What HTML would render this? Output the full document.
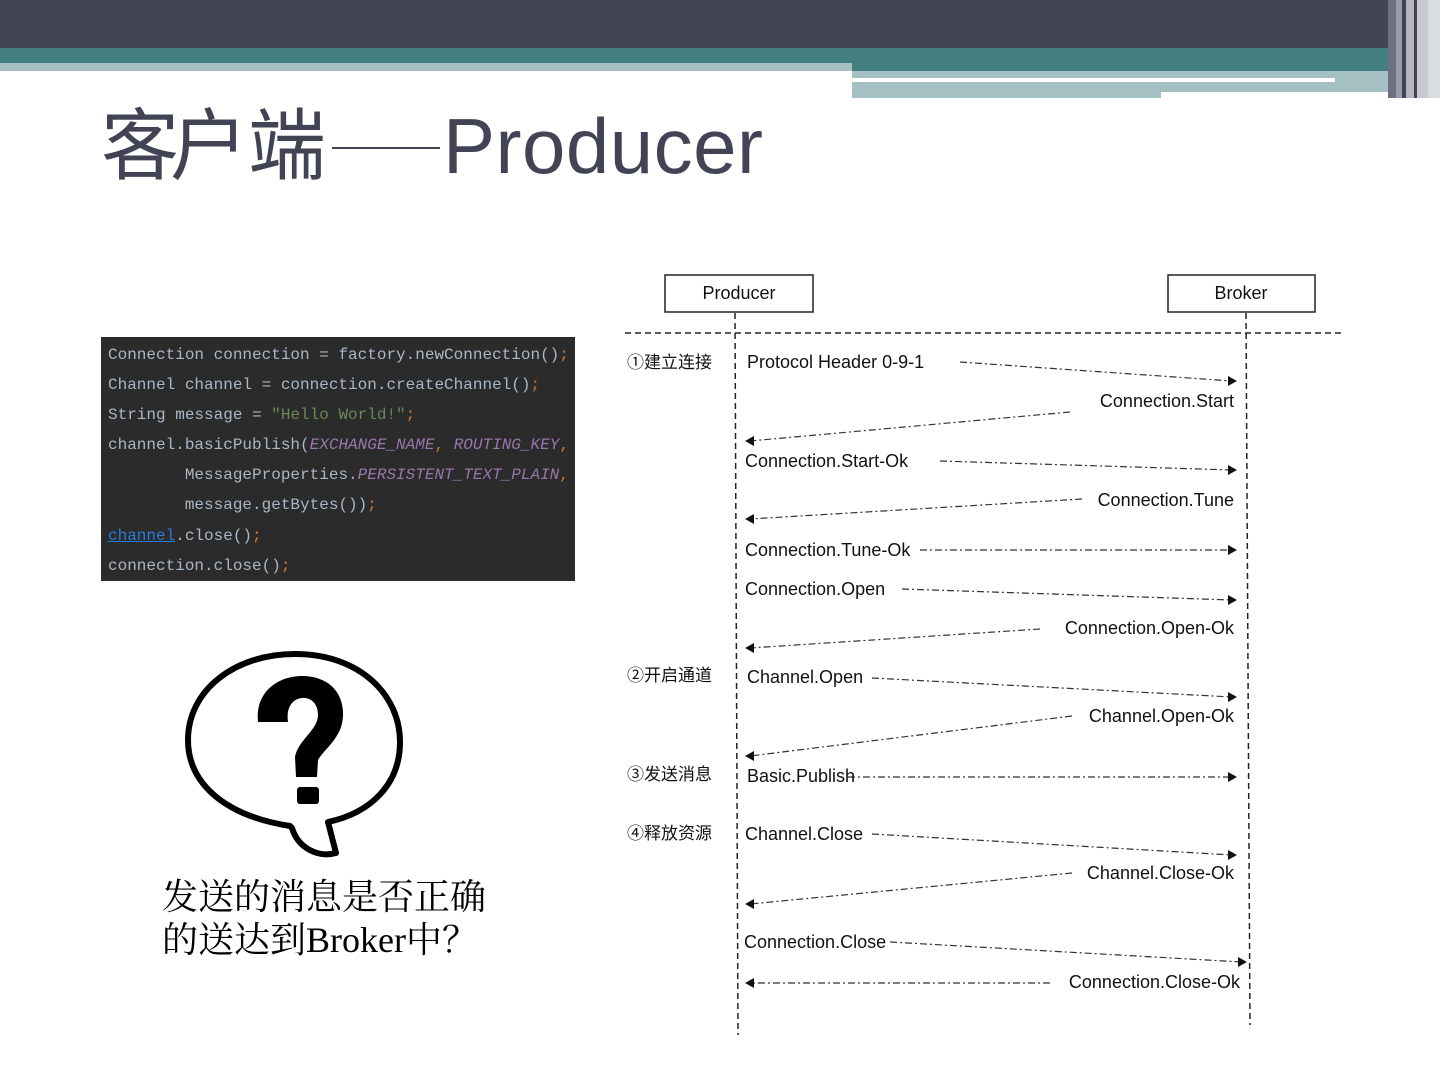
<!DOCTYPE html>
<html><head><meta charset="utf-8"><style>
body{margin:0;width:1440px;height:1080px;position:relative;background:#fff;overflow:hidden;font-family:"Liberation Sans","Noto Sans CJK SC",sans-serif}
.b{position:absolute}
.code{position:absolute;left:101px;top:337px;width:474px;height:244px;background:#2b2b2b;font-family:"Liberation Mono","Noto Sans CJK SC",monospace;font-size:16px;color:#a9b7c6}
.code div{position:absolute;left:7px;white-space:pre}
.k{color:#9876aa;font-style:italic}.s{color:#6a8759}.p{color:#cc7832}
.t{position:absolute;top:96px;font-size:78px;color:#424456;white-space:nowrap;line-height:100px}
</style></head><body>
<div class="b" style="left:0;top:0;width:1440px;height:48px;background:#424456"></div>
<div class="b" style="left:0;top:48px;width:1440px;height:23px;background:#437f80"></div>
<div class="b" style="left:0;top:63px;width:852px;height:8px;background:#a4c0c2"></div>
<div class="b" style="left:0;top:71px;width:852px;height:30px;background:#fff"></div>
<div class="b" style="left:852px;top:71px;width:560px;height:27px;background:#a4c0c2"></div>
<div class="b" style="left:852px;top:78px;width:483px;height:4px;background:#fff"></div>
<div class="b" style="left:1161px;top:92px;width:250px;height:6px;background:#fff"></div>
<div class="b" style="left:1388px;top:0;width:52px;height:98px;background:linear-gradient(90deg,#6e6f80 0 8px,#9a9ba8 8px 14px,#424456 14px 18px,#b5b6c0 18px 26px,#424456 26px 29px,#c8c9d0 29px 40px,#d8dde0 40px)"></div>
<div class="t" style="left:101px">客</div>
<div class="t" style="left:170px">户</div>
<div class="t" style="left:248px">端</div>
<div class="b" style="left:332px;top:147px;width:108px;height:2px;background:#424456"></div>
<div class="t" style="left:443px;letter-spacing:0.5px">Producer</div>
<div class="code">
<div style="top:9px">Connection connection = factory.newConnection()<span class="p">;</span></div>
<div style="top:39px">Channel channel = connection.createChannel()<span class="p">;</span></div>
<div style="top:69px">String message = <span class="s">"Hello World!"</span><span class="p">;</span></div>
<div style="top:99px">channel.basicPublish(<span class="k">EXCHANGE_NAME</span><span class="p">,</span> <span class="k">ROUTING_KEY</span><span class="p">,</span></div>
<div style="top:129px">        MessageProperties.<span class="k">PERSISTENT_TEXT_PLAIN</span><span class="p">,</span></div>
<div style="top:159px">        message.getBytes())<span class="p">;</span></div>
<div style="top:190px"><span style="color:#287bde;text-decoration:underline">channel</span>.close()<span class="p">;</span></div>
<div style="top:220px">connection.close()<span class="p">;</span></div>
</div>
<svg class="b" style="left:0;top:0" width="1440" height="1080">
<path d="M290 826 C220 815 188 780 188 740 C188 690 235 654 295 654 C360 654 400 695 400 742 C400 785 370 813 328 822 L336 853 C318 858 298 848 292 828 Z" fill="#fff" stroke="#000" stroke-width="6" stroke-linejoin="round"/>
<path d="M258 722 C255 690 280 676 302 676 C328 676 344 692 343 716 C342 738 325 748 318 760 L317 777 L296 777 L295 757 C298 740 318 730 318 715 C318 703 310 697 302 698 C292 699 286 708 288 722 Z" fill="#000"/>
<rect x="297" y="787" width="22" height="17" rx="3" fill="#000"/>
<g font-family="Liberation Sans Narrow,Liberation Sans,Noto Sans CJK SC,sans-serif" font-size="18" fill="#111">
<rect x="665" y="275" width="148" height="37" fill="#fff" stroke="#222" stroke-width="1.5"/>
<rect x="1168" y="275" width="147" height="37" fill="#fff" stroke="#222" stroke-width="1.5"/>
<text x="739" y="299" text-anchor="middle">Producer</text>
<text x="1241" y="299" text-anchor="middle">Broker</text>
<g stroke="#222" stroke-width="1.5" stroke-dasharray="6 4" fill="none">
<line x1="625" y1="333" x2="1345" y2="333"/>
<line x1="735" y1="313" x2="738" y2="1035"/>
<line x1="1246" y1="313" x2="1250" y2="1025"/>
</g>
<g stroke="#333" stroke-width="1.2" stroke-dasharray="7 3 2 3" fill="none">
<line x1="960" y1="362" x2="1232" y2="381"/>
<line x1="1070" y1="412" x2="750" y2="441"/>
<line x1="940" y1="461" x2="1232" y2="470"/>
<line x1="1082" y1="499" x2="750" y2="519"/>
<line x1="920" y1="550" x2="1232" y2="550"/>
<line x1="902" y1="589" x2="1232" y2="600"/>
<line x1="1040" y1="629" x2="750" y2="648"/>
<line x1="872" y1="678" x2="1232" y2="697"/>
<line x1="1072" y1="716" x2="750" y2="756"/>
<line x1="848" y1="777" x2="1232" y2="777"/>
<line x1="872" y1="834" x2="1232" y2="855"/>
<line x1="1072" y1="873" x2="750" y2="904"/>
<line x1="890" y1="942" x2="1242" y2="962"/>
<line x1="1050" y1="983" x2="750" y2="983"/>
</g>
<g fill="#111">
<path d="M1237 381 l-9 -5 v10z"/><path d="M745 441 l9 -5 v10z"/><path d="M1237 470 l-9 -5 v10z"/><path d="M745 519 l9 -5 v10z"/>
<path d="M1237 550 l-9 -5 v10z"/><path d="M1237 600 l-9 -5 v10z"/><path d="M745 648 l9 -5 v10z"/><path d="M1237 697 l-9 -5 v10z"/>
<path d="M745 756 l9 -5 v10z"/><path d="M1237 777 l-9 -5 v10z"/><path d="M1237 855 l-9 -5 v10z"/><path d="M745 904 l9 -5 v10z"/>
<path d="M1247 962 l-9 -5 v10z"/><path d="M745 983 l9 -5 v10z"/>
</g>
<text x="747" y="368">Protocol Header 0-9-1</text>
<text x="1234" y="407" text-anchor="end">Connection.Start</text>
<text x="745" y="467">Connection.Start-Ok</text>
<text x="1234" y="506" text-anchor="end">Connection.Tune</text>
<text x="745" y="556">Connection.Tune-Ok</text>
<text x="745" y="595">Connection.Open</text>
<text x="1234" y="634" text-anchor="end">Connection.Open-Ok</text>
<text x="747" y="683">Channel.Open</text>
<text x="1234" y="722" text-anchor="end">Channel.Open-Ok</text>
<text x="747" y="782">Basic.Publish</text>
<text x="745" y="840">Channel.Close</text>
<text x="1234" y="879" text-anchor="end">Channel.Close-Ok</text>
<text x="744" y="948">Connection.Close</text>
<text x="1240" y="988" text-anchor="end">Connection.Close-Ok</text>
<g font-size="17"><text x="627" y="368">①建立连接</text><text x="627" y="681">②开启通道</text><text x="627" y="780">③发送消息</text><text x="627" y="839">④释放资源</text></g>
</g>
</svg>
<div class="b" style="left:162px;top:876px;font-family:'Liberation Serif','Noto Serif CJK SC',serif;font-size:36px;line-height:43px;color:#000">发送的消息是否正确<br>的送达到Broker中？</div>
</body></html>
